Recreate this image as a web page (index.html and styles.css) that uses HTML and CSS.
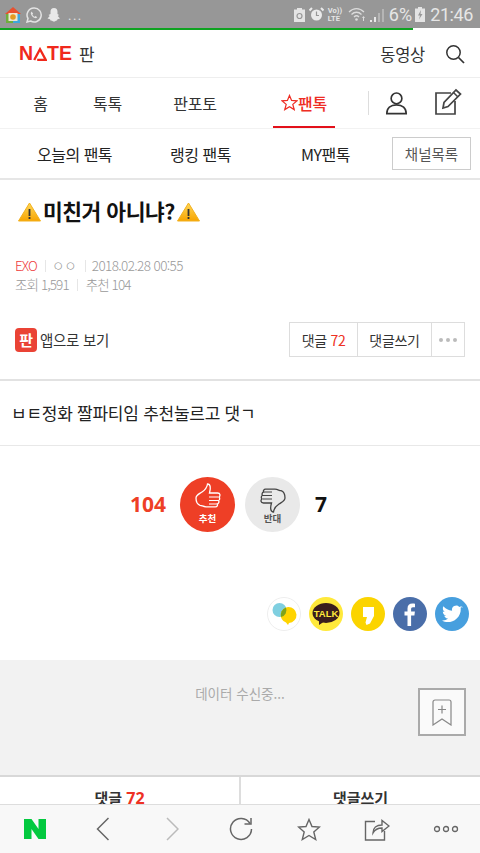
FILE: index.html
```html
<!DOCTYPE html>
<html lang="ko">
<head>
<meta charset="utf-8">
<title>NATE 판</title>
<link rel="stylesheet" href="styles.css">
</head>
<body>
<div class="phone">
  <div class="status">
    <div class="status-left">
      <svg class="si" width="16" height="16" viewBox="0 0 16 16"><path d="M8 0 16 7H0z" fill="#e8502f"/><rect x="1" y="7" width="7" height="9" fill="#6fae3c"/><rect x="8" y="7" width="7" height="9" fill="#3fa7dc"/><rect x="3.500" y="6" width="9" height="8" fill="#efe6d0"/><circle cx="8" cy="10" r="2.800" fill="#e39a22"/></svg>
      <svg class="si" width="16" height="16" viewBox="0 0 16 16"><path d="M8 1a7 7 0 0 0-6 10.500L1 15l3.600-1A7 7 0 1 0 8 1z" fill="none" stroke="#e4e4e4" stroke-width="1.500"/><path d="M5.500 4.500 4.800 6c0 2.500 2.700 5 5.200 5.200l1.300-1-1.700-1.200-.9.700C7.600 9.300 6.700 8.300 6.400 7.400l.7-.9z" fill="#e4e4e4"/></svg>
      <svg class="si" width="14" height="15" viewBox="0 0 14 15"><path d="M7 1c2.300 0 3.500 1.700 3.500 3.700V7l1.500 1-1.200 1 2.200 2.500-2.500.8-.5 1.200C9 13 8.500 14.500 7 14.500S5 13 3.500 13.500L3 12.300.5 11.500 2.700 9 1.500 8 3.500 7V4.700C3.500 2.700 4.700 1 7 1z" fill="#e8e8e8"/></svg>
      <span class="dots">...</span>
    </div>
    <div class="status-right">
      <svg class="si s-lock" width="11" height="14" viewBox="0 0 11 14"><path d="M3 0h5v1.500h3V14H0V1.500h3z" fill="#e4e4e4"/><circle cx="5.500" cy="8" r="2.500" fill="none" stroke="#979797" stroke-width="1.200"/></svg>
      <svg class="si s-alarm" width="15" height="15" viewBox="0 0 15 15"><circle cx="7.500" cy="8" r="5.500" fill="#eaeaea"/><path d="M7.500 4.500V8.500H10" fill="none" stroke="#979797" stroke-width="1.200"/><path d="M.5 3.500 3 1M14.500 3.500 12 1" stroke="#eaeaea" stroke-width="2"/></svg>
      <span class="volte"><span>Vo))</span><span>LTE</span></span>
      <svg class="si s-wifi" width="20" height="15" viewBox="0 0 20 15"><path d="M1 5c4.500-4.500 10.500-4.500 15 0M3.500 7.500c3-3 7-3 10 0M6 10c1.500-1.500 3.500-1.500 5 0" fill="none" stroke="#dcdcdc" stroke-width="1.300"/><circle cx="8.500" cy="12.500" r="1.300" fill="#dcdcdc"/><path d="M15 14v-3h-1l1.500-2 1.500 2h-1v3z" fill="#dcdcdc"/></svg>
      <svg class="si s-signal" width="15" height="14" viewBox="0 0 15 14"><path d="M1 14v-2h2v2zM5 14V9h2v5z" fill="#e8e8e8"/><path d="M9 14V5h2v9zM13 14V1h2v13z" fill="#b5b5b5"/></svg>
      <span class="pct">6%</span>
      <svg class="si s-batt" width="10" height="15" viewBox="0 0 10 15"><path d="M3 0h4v1.500h3V15H0V1.500h3z" fill="#e4e4e4"/><path d="M6 3 3 8.500h2L4 12.500 7.500 7H5.500z" fill="#979797"/></svg>
      <span class="clock">21:46</span>
    </div>
  </div>
  <div class="progress"><div class="progress-fill"></div></div>

  <header class="top">
    <div class="brand"><span class="nate">N<svg class="nate-a" width="14" height="14" viewBox="0 0 14 14"><path d="M1.200 13 7 2.200 12.800 13H4.200" fill="none" stroke="#f0291c" stroke-width="2.300"/></svg>TE</span><span class="pan">판</span></div>
    <div class="top-right">
      <span class="video">동영상</span>
      <svg width="20" height="20" viewBox="0 0 20 20"><circle cx="8.500" cy="8.500" r="6.700" fill="none" stroke="#333" stroke-width="1.500"/><path d="M13.500 13.500 19 19" stroke="#333" stroke-width="1.700"/></svg>
    </div>
  </header>

  <nav class="nav">
    <a class="nav-item home">홈</a>
    <a class="nav-item toktok">톡톡</a>
    <a class="nav-item panpo">판포토</a>
    <a class="nav-item fantok"><svg width="17" height="17" viewBox="0 0 18 18"><path d="M9 1.500 11.200 6.800 17 7.200 12.500 11 14 16.500 9 13.500 4 16.500 5.500 11 1 7.200 6.800 6.800z" fill="none" stroke="#ee2d24" stroke-width="1.300"/></svg>팬톡</a>
    <span class="nav-sep"></span>
    <svg class="nav-user" width="23" height="24" viewBox="0 0 24 26"><circle cx="12" cy="8" r="5.800" fill="none" stroke="#333" stroke-width="1.800"/><path d="M1.500 24.500c0-6 4-9.500 10.500-9.500s10.500 3.500 10.500 9.500z" fill="none" stroke="#333" stroke-width="1.800"/></svg>
    <svg class="nav-write" width="28" height="28" viewBox="0 0 28 28"><path d="M17 5H2v21h19V13" fill="none" stroke="#444" stroke-width="1.700"/><path d="M9 20 10 14.500 22 2l4.500 4L14 18.500z" fill="none" stroke="#444" stroke-width="1.700"/><path d="M19.500 4.500 24 9" stroke="#444" stroke-width="1.500"/></svg>
  </nav>

  <div class="subnav">
    <a class="sub today">오늘의 팬톡</a>
    <a class="sub rank">랭킹 팬톡</a>
    <a class="sub my">MY팬톡</a>
    <a class="channel">채널목록</a>
  </div>

  <section class="head">
    <h1 class="title"><svg class="warn" width="23" height="20" viewBox="0 0 23 20"><defs><linearGradient id="wg" x1="0" y1="0" x2="0" y2="1"><stop offset="0" stop-color="#ffd85a"/><stop offset="1" stop-color="#f7a400"/></linearGradient></defs><path d="M11.500 1 22.500 19H.5z" fill="url(#wg)" stroke="#f2b01e" stroke-linejoin="round"/><rect x="10.600" y="7" width="1.800" height="7" fill="#333"/><rect x="10.600" y="15" width="1.800" height="2" fill="#333"/></svg>미친거 아니냐?<svg class="warn" width="23" height="20" viewBox="0 0 23 20"><path d="M11.500 1 22.500 19H.5z" fill="url(#wg)" stroke="#f2b01e" stroke-linejoin="round"/><rect x="10.600" y="7" width="1.800" height="7" fill="#333"/><rect x="10.600" y="15" width="1.800" height="2" fill="#333"/></svg></h1>
    <div class="meta">
      <div class="meta-line"><span class="cat">EXO</span><i></i><span class="nick">ㅇㅇ</span><i></i><span class="date">2018.02.28 00:55</span></div>
      <div class="meta-line"><span>조회 1,591</span><i></i><span>추천 104</span></div>
    </div>
    <div class="actions">
      <div class="app">
        <span class="app-icon">판</span>
        <span>앱으로 보기</span>
      </div>
      <div class="btns">
        <a class="btn b1">댓글 <em>72</em></a>
        <a class="btn b2">댓글쓰기</a>
        <a class="btn b3"><b></b><b></b><b></b></a>
      </div>
    </div>
  </section>

  <p class="body-text">ㅂㅌ정화 짤파티임 추천눌르고 댓ㄱ</p>

  <section class="vote">
    <span class="vote-num up">104</span>
    <div class="vote-pair">
      <div class="circle red">
        <svg width="28" height="30" viewBox="0 0 28 30"><path d="M2 15c0-3 3-4 6-6s5-4 5.500-8c3 0 3.500 4 2 9h8c3 0 3 3 1.500 4 1 1 1 3-.5 3.500.8 1 .5 3-1 3.300.5 1.500-.5 3-2 3H12c-3 0-4-1.500-6-1.500-3-1-4-4-4-7.300z" fill="none" stroke="#fff" stroke-width="1.300"/><path d="M15 14h9M15 17.500h9M15 21h8" stroke="#fff" stroke-width="1.100"/></svg>
        <span>추천</span>
      </div>
      <div class="circle gray">
        <svg width="28" height="30" viewBox="0 0 28 30"><path d="M26 15c0 3-3 4-6 6s-5 4-5.500 8c-3 0-3.500-4-2-9h-8c-3 0-3-3-1.500-4-1-1-1-3 .5-3.500-.8-1-.5-3 1-3.300-.5-1.500.5-3 2-3H16c3 0 4 1.500 6 1.500 3 1 4 4 4 7.300z" fill="none" stroke="#444" stroke-width="1.300"/><path d="M13 16H4M13 12.500H4M13 9H5" stroke="#444" stroke-width="1.100"/></svg>
        <span>반대</span>
      </div>
    </div>
    <span class="vote-num down">7</span>
  </section>

  <div class="share">
    <svg width="34" height="34" viewBox="0 0 34 34"><circle cx="17" cy="17" r="16.500" fill="#fff" stroke="#eee"/><circle cx="12.500" cy="13" r="7" fill="#7fcfe0"/><path d="M21 10a8 8 0 0 1 1 16l-1 2-2-2.500A8 8 0 0 1 21 10z" fill="#ffd400"/><path d="M14 20a7 7 0 0 0 5-9.500 8 8 0 0 0-5 9.500z" fill="#7fa31a"/></svg>
    <svg width="34" height="34" viewBox="0 0 34 34"><circle cx="17" cy="17" r="17" fill="#ffe93b"/><ellipse cx="17" cy="16" rx="13.500" ry="10" fill="#3a1d1d"/><path d="M10 23v5l6-4z" fill="#3a1d1d"/><text x="17" y="19.500" class="talk">TALK</text></svg>
    <svg width="34" height="34" viewBox="0 0 34 34"><circle cx="17" cy="17" r="17" fill="#fbd400"/><path d="M12 10h11v9l-4 7.500-3.500 1.500-1-2.500 1.500-5.500H12z" fill="#fff"/></svg>
    <svg width="34" height="34" viewBox="0 0 34 34"><circle cx="17" cy="17" r="17" fill="#4a6ea9"/><path d="M14.500 29V18.500h-3v-4h3v-3c0-3.200 2-5 4.800-5 1.300 0 2.400.1 2.700.2v3.600h-2c-1.500 0-1.900.8-1.900 1.900v2.300h3.800l-.5 4h-3.300V29z" fill="#fff"/></svg>
    <svg width="34" height="34" viewBox="0 0 34 34"><circle cx="17" cy="17" r="17" fill="#479fde"/><path d="M27.500 10.500c-.8.400-1.600.6-2.400.7.900-.5 1.500-1.300 1.800-2.300-.8.500-1.700.8-2.600 1a4.200 4.200 0 0 0-7.200 3.800C13.600 13.500 10.500 11.800 8.400 9.300c-1.100 1.900-.6 4.300 1.300 5.600-.7 0-1.300-.2-1.900-.5 0 2 1.400 3.800 3.400 4.200-.6.200-1.300.2-1.900.1.500 1.700 2.100 2.900 3.900 2.900-1.800 1.400-4 2-6.200 1.800 6.800 4.300 19-.2 18.800-12 .7-.6 1.300-1.200 1.700-1.900z" fill="#fff"/></svg>
  </div>

  <section class="loading">
    <span class="loading-text">데이터 수신중...</span>
    <div class="bookmark">
      <svg width="20" height="27" viewBox="0 0 20 27"><path d="M1 26V3a2 2 0 0 1 2-2h14a2 2 0 0 1 2 2v23l-9-6z" fill="none" stroke="#888" stroke-width="1.200"/><path d="M10 6.500v8M6 10.500h8" stroke="#888" stroke-width="1.200"/></svg>
    </div>
  </section>

  <div class="tabs">
    <a class="tab">댓글 <em>72</em></a>
    <a class="tab">댓글쓰기</a>
  </div>

  <footer class="toolbar">
    <svg class="tool" width="24" height="22" viewBox="0 0 24 22"><path d="M1 1h7.500l7 10V1H23v20h-7.500l-7-10v10H1z" fill="#03c93f"/></svg>
    <svg class="tool" width="13" height="24" viewBox="0 0 13 24"><path d="M12.500 1 1.500 12 12.500 23" fill="none" stroke="#666" stroke-width="1.500"/></svg>
    <svg class="tool" width="13" height="24" viewBox="0 0 13 24"><path d="M1 1 12 12 1 23" fill="none" stroke="#bbb" stroke-width="1.500"/></svg>
    <svg class="tool" width="24" height="24" viewBox="0 0 24 24"><path d="M21 6.500A10.500 10.500 0 1 0 22.500 12" fill="none" stroke="#666" stroke-width="1.500"/><path d="M22 1v6h-6.500" fill="none" stroke="#666" stroke-width="1.500"/></svg>
    <svg class="tool" width="24" height="23" viewBox="0 0 24 23"><path d="M12 1.500 15 8.500 22.500 9 16.800 14 18.700 21.500 12 17.500 5.300 21.500 7.200 14 1.500 9 9 8.500z" fill="none" stroke="#666" stroke-width="1.400"/></svg>
    <svg class="tool" width="26" height="24" viewBox="0 0 26 24"><path d="M11 4.500H1.500V23h19v-9" fill="none" stroke="#666" stroke-width="1.400"/><path d="M9 16c0-5 3.500-8 9-8V3.500L25 9l-7 5.500V11c-4 0-7 1.500-9 5z" fill="none" stroke="#666" stroke-width="1.400"/></svg>
    <svg class="tool more" width="26" height="8" viewBox="0 0 26 8"><circle cx="4" cy="4" r="2.500" fill="none" stroke="#666" stroke-width="1.300"/><circle cx="13" cy="4" r="2.500" fill="none" stroke="#666" stroke-width="1.300"/><circle cx="22" cy="4" r="2.500" fill="none" stroke="#666" stroke-width="1.300"/></svg>
  </footer>
</div>
</body>
</html>
```

FILE: styles.css
```css
* { box-sizing: border-box; }
html, body { margin: 0; padding: 0; }
body { width: 480px; height: 853px; overflow: hidden; background: #fff; font-family: "Noto Sans CJK KR", "Noto Sans", sans-serif; color: #333; }
a { color: inherit; text-decoration: none; }
em { font-style: normal; color: #ee3124; }
.phone { position: relative; width: 480px; height: 853px; overflow: hidden; display: flex; flex-direction: column; }

.status { height: 28px; background: #979797; display: flex; justify-content: space-between; align-items: center; padding: 1px 7px 0 5px; color: #e6e6e6; font-family: Roboto, sans-serif; flex: none; }
.status-left, .status-right { display: flex; align-items: center; }
.status-left { gap: 5px; }
.si { display: block; flex: none; }
.dots { font-size: 13px; letter-spacing: 1.500px; line-height: 14px; margin-top: 3px; margin-left: 2px; }
.s-alarm { margin-left: 4px; }
.volte { display: flex; flex-direction: column; font-size: 7.500px; line-height: 8px; font-weight: 700; margin-left: 4px; width: 14px; }
.s-wifi { margin-left: 6px; }
.s-signal { margin-left: 1px; }
.pct { font-size: 18px; margin-left: 5px; }
.s-batt { margin-left: 3px; }
.clock { font-size: 18px; margin-left: 5px; letter-spacing: -.4px; }
.progress { height: 2px; background: #fff; flex: none; }
.progress-fill { width: 413px; height: 2px; background: #0ea220; }

.top { height: 48px; display: flex; justify-content: space-between; align-items: center; padding: 0 15px 0 19px; border-bottom: 1px solid #eee; flex: none; }
.brand { display: flex; align-items: center; }
.nate { font-family: "Liberation Sans", sans-serif; font-weight: 700; font-size: 19.500px; color: #f0291c; display: flex; align-items: center; }
.pan { font-size: 17px; margin-left: 7px; color: #333; }
.top-right { display: flex; align-items: center; gap: 20px; }
.video { font-size: 16.500px; letter-spacing: -.3px; }

.nav { position: relative; height: 51px; display: flex; align-items: center; border-bottom: 1px solid #f2f2f2; font-size: 16px; flex: none; letter-spacing: -.2px; }
.nav-item { display: flex; align-items: center; height: 100%; justify-content: center; white-space: nowrap; flex: none; }
.home { margin-left: 33px; width: 15px; }
.toktok { margin-left: 45px; width: 29px; }
.panpo { margin-left: 51px; width: 44px; }
.fantok { margin-left: 56px; width: 62px; color: #ee2d24; font-weight: 500; border-bottom: 2px solid #e3101a; padding-top: 1px; }
.nav-sep { width: 1px; height: 24px; background: #ddd; margin-left: 33px; }
.nav-user { margin-left: 16px; }
.nav-write { margin-left: 26px; margin-top: -3px; }

.subnav { height: 51px; display: flex; align-items: center; font-size: 16px; letter-spacing: -.5px; color: #222; border-bottom: 2px solid #e6e6e6; flex: none; }
.sub { display: block; flex: none; white-space: nowrap; }
.today { margin-left: 37px; width: 75px; }
.rank { margin-left: 58px; width: 61px; }
.my { margin-left: 70px; width: 48px; }
.channel { margin-left: 43px; width: 79px; height: 33px; border: 1px solid #ccc; display: flex; align-items: center; justify-content: center; font-size: 14.500px; color: #555; letter-spacing: 0; flex: none; }

.head { border-bottom: 2px solid #e2e2e2; height: 201px; padding: 0 15px 0 15px; flex: none; }
.title { margin: 14px 0 0 3px; height: 32px; display: flex; align-items: center; gap: 2px; font-size: 21.500px; font-weight: 700; color: #111; letter-spacing: -.5px; }
.warn { flex: none; margin-top: 3px; }
.meta { margin-top: 30px; font-size: 13.500px; line-height: 19px; color: #999; letter-spacing: -.9px; font-weight: 300; }
.meta-line { display: flex; align-items: center; }
.meta-line i { width: 1px; height: 12px; background: #e6e6e6; margin: 0 8px; }
.cat { color: #ee3a3a; }
.nick { letter-spacing: 0; margin-left: -2px; margin-right: 0; }
.date { letter-spacing: -.6px; margin-left: -2px; }
.actions { margin-top: 28px; display: flex; justify-content: space-between; align-items: center; height: 35px; }
.app { display: flex; align-items: center; gap: 3px; font-size: 14.500px; letter-spacing: -.3px; color: #333; }
.app-icon { width: 22px; height: 24px; background: #ea4335; border-radius: 4px; color: #fff; font-size: 15px; font-weight: 700; display: flex; align-items: center; justify-content: center; }
.btns { display: flex; height: 35px; border: 1px solid #ddd; font-size: 14px; letter-spacing: -.3px; }
.btn { display: flex; align-items: center; justify-content: center; border-left: 1px solid #ddd; }
.b1 { width: 67px; border-left: 0; white-space: pre; }
.b2 { width: 74px; }
.b3 { flex: 1; width: 33px; gap: 3px; }
.b3 b { width: 4px; height: 4px; border-radius: 50%; background: #bbb; }

.body-text { margin: 0; height: 65px; padding: 0 0 2px 11px; display: flex; align-items: center; font-size: 17px; color: #222; border-bottom: 1px solid #e8e8e8; letter-spacing: -.25px; flex: none; }

.vote { height: 115px; display: grid; grid-template-columns: 1fr auto 1fr; align-items: center; flex: none; padding-top: 1px; }
.vote-pair { display: flex; gap: 10px; }
.vote-num { font-family: "Open Sans", sans-serif; font-weight: 700; font-size: 21px; }
.up { color: #ee3f26; justify-self: end; margin-right: 14px; }
.down { color: #111; justify-self: start; margin-left: 15px; }
.circle { width: 55px; height: 55px; border-radius: 50%; display: flex; flex-direction: column; align-items: center; justify-content: center; font-size: 9.500px; font-weight: 700; line-height: 11px; }
.circle svg { display: block; margin-top: -2px; }
.red { background: #ee3f26; color: #fff; }
.gray { background: #e9e9e9; color: #555; }

.share { display: flex; justify-content: flex-end; gap: 8px; padding: 36px 11px 0 0; height: 99px; flex: none; }
.talk { font-family: "Liberation Sans", sans-serif; font-weight: 700; font-size: 9.500px; fill: #ffe93b; text-anchor: middle; }

.loading { position: relative; height: 117px; background: #f2f2f2; border-bottom: 2px solid #d8d8d8; display: flex; justify-content: center; flex: none; }
.loading-text { margin-top: 23px; font-size: 13.500px; color: #aaa; line-height: 20px; }
.bookmark { position: absolute; right: 14px; top: 28px; width: 48px; height: 48px; border: 2px solid #aaa; background: #fafafa; display: flex; align-items: center; justify-content: center; }

.tabs { height: 27px; display: flex; overflow: hidden; flex: none; background: #fff; font-weight: 700; font-size: 15px; color: #333; }
.tab { flex: 1; display: flex; justify-content: center; padding-top: 11px; white-space: pre; line-height: 20px; }
.tab + .tab { border-left: 2px solid #ddd; }
.tab em { color: #ee3124; font-family: "Open Sans", sans-serif; font-size: 16px; }

.toolbar { position: absolute; left: 0; right: 0; bottom: 0; height: 49px; background: #f8f8f8; border-top: 1px solid #ddd; display: grid; grid-template-columns: 69px 66px 75px 61px 75px 62px 72px; align-items: center; justify-items: center; }
.tool { display: block; }
.more { margin-left: 3px; }
```
